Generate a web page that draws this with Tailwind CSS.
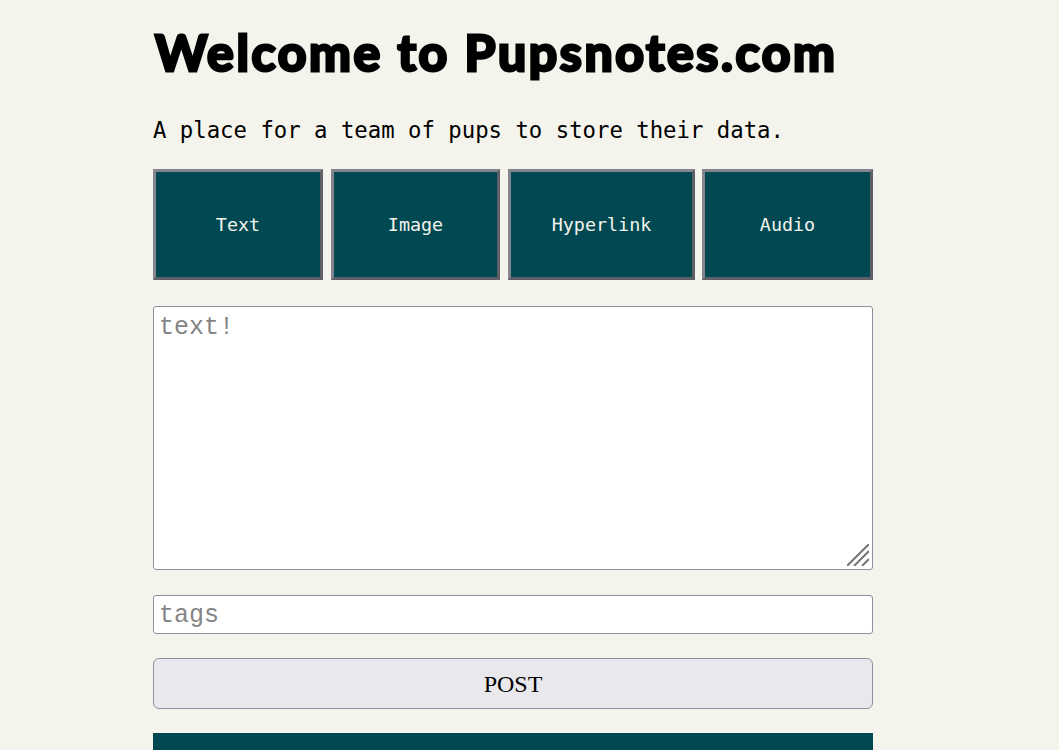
<!DOCTYPE html>
<html>
<head>
    <title>Pupsnotes</title>
    <meta name="viewport" content="width=device-width, initial-scale=1.0">
    <script src="https://cdn.jsdelivr.net/npm/@tailwindcss/browser@4"></script>
</head>
<body class="bg-[#f4f3ec] h-[750px] overflow-hidden">
    <main class="w-[720px] ml-[153px] font-['DejaVu_Sans_Mono',monospace] text-black">
        <h1 class="pt-[21px] pl-[2px] h-[116px] text-[50px] leading-[62px] font-bold font-['Lato',sans-serif] tracking-[2.6px] [-webkit-text-stroke:3px_black]">Welcome to Pupsnotes.com</h1>

        <p class="text-[22.3px] leading-[28px] h-[53px]">A place for a team of pups to store their data.</p>

        <div class="flex gap-2 h-[111px]">
            <button class="w-[170px] border-[3px] border-t-[#85858f] border-l-[#85858f] border-b-[#5f5f68] border-r-[#5f5f68] bg-[#004953] text-[#f4f3ec] text-[18.4px]">Text</button>
            <button class="w-[169px] border-[3px] border-t-[#85858f] border-l-[#85858f] border-b-[#5f5f68] border-r-[#5f5f68] bg-[#004953] text-[#f4f3ec] text-[18.4px]">Image</button>
            <button class="w-[187px] border-[3px] border-t-[#85858f] border-l-[#85858f] border-b-[#5f5f68] border-r-[#5f5f68] bg-[#004953] text-[#f4f3ec] text-[18.4px] -mr-px">Hyperlink</button>
            <button class="w-[171px] border-[3px] border-t-[#85858f] border-l-[#85858f] border-b-[#5f5f68] border-r-[#5f5f68] bg-[#004953] text-[#f4f3ec] text-[18.4px]">Audio</button>
        </div>

        <div class="relative mt-[26px] h-[264px]">
            <textarea placeholder="text!" class="block w-full h-full resize-none bg-white border border-[#8f8f9d] rounded-[3px] px-[5px] py-[2px] font-['Liberation_Mono',monospace] text-[25px] leading-[37px] placeholder:text-[#858585]"></textarea>
            <svg class="absolute right-[4px] bottom-[4px] w-[22px] h-[22px]" viewBox="0 0 22 22" fill="none" stroke="#757575" stroke-width="2">
                <path d="M0 22 22 0M7 22 22 7M15 22 22 15"/>
            </svg>
        </div>

        <input type="text" placeholder="tags" class="block w-full h-[39px] mt-[25px] pt-[2px] bg-white border border-[#8f8f9d] rounded-[3px] px-[5px] font-['Liberation_Mono',monospace] text-[25px] placeholder:text-[#858585]">

        <button class="block w-full h-[51px] mt-[24px] bg-[#e9e9ed] border border-[#8f8f9d] rounded-[6px] font-['Liberation_Serif',serif] text-[24px]">POST</button>

        <div class="h-[17px] mt-[24px] bg-[#004953]"></div>
    </main>
</body>
</html>
